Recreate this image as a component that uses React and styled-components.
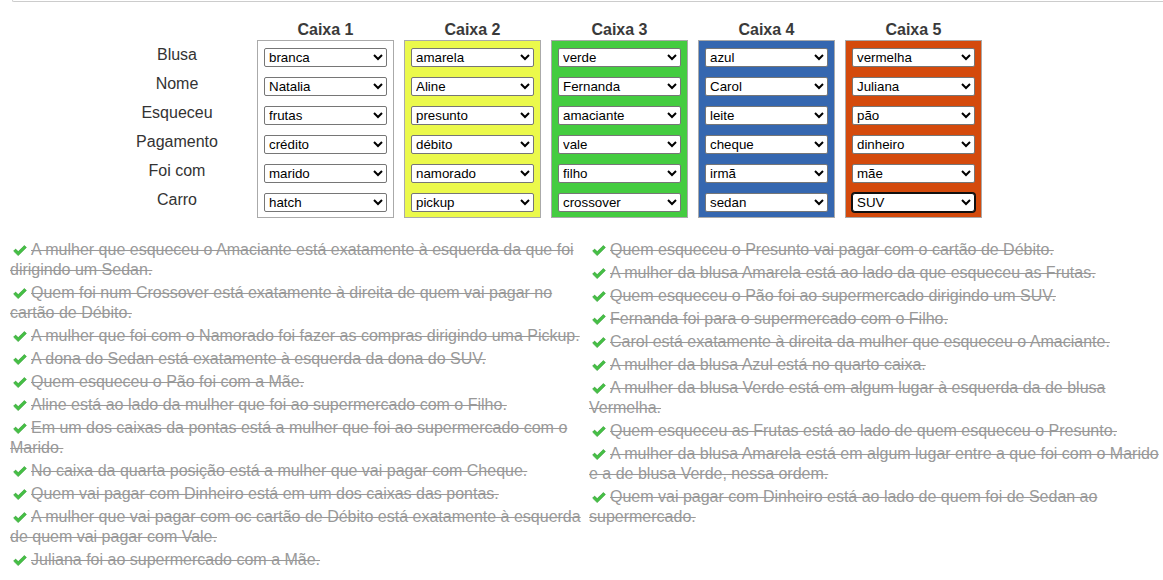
import React from "react";
import styled, { createGlobalStyle } from "styled-components";

const Global = createGlobalStyle`
  html, body { margin: 0; padding: 0; background: #fff; }
  body { font-family: "Liberation Sans", Arial, sans-serif; color: #333; }
`;

const Page = styled.div`
  width: 1163px;
  overflow: hidden;
`;

const TopRule = styled.div`
  margin-left: 12px;
  height: 1px;
  border: 1px solid #ccc;
  border-top: none;
  border-right: none;
  border-bottom-left-radius: 3px;
`;

const Board = styled.div`
  display: grid;
  grid-template-columns: 140px repeat(5, 137px);
  column-gap: 10px;
  padding-left: 107px;
  margin-top: 18px;
`;

const LabelColumn = styled.div`
  display: flex;
  flex-direction: column;
  padding-top: 20px;
`;

const RowLabel = styled.div`
  height: 29px;
  line-height: 29px;
  font-size: 16px;
  text-align: center;
  color: #333;
`;

const BoxColumn = styled.div`
  display: flex;
  flex-direction: column;
`;

const BoxTitle = styled.div`
  height: 20px;
  line-height: 20px;
  font-size: 16px;
  font-weight: bold;
  text-align: center;
  color: #3a3a3a;
`;

const Box = styled.div`
  display: flex;
  flex-direction: column;
  gap: 10px;
  border: 1px solid #aaa;
  padding: 7px 6px 5px;
  background: ${(p) => p.$bg};
`;

const Select = styled.select`
  width: 123px;
  height: 19px;
  margin: 0;
  box-sizing: border-box;
  font-family: "Liberation Sans", Arial, sans-serif;
  font-size: 13.33px;
  color: #000;
  background: #fff;
  border: 1px solid ${(p) => (p.$focused ? "#101010" : "#767676")};
  border-radius: ${(p) => (p.$focused ? "3px" : "2px")};
  box-shadow: ${(p) => (p.$focused ? "0 0 0 1px #101010" : "none")};
  outline: none;
`;

const Clues = styled.div`
  display: grid;
  grid-template-columns: 577px 1fr;
  align-items: start;
  padding-left: 10px;
  margin-top: 22px;
`;

const ClueList = styled.div`
  display: flex;
  flex-direction: column;
  padding-left: ${(p) => p.$pad || 0}px;
`;

const Clue = styled.p`
  margin: 0 0 3px;
  font-size: 16px;
  line-height: 20px;
  color: #999;
`;

const ClueText = styled.span`
  text-decoration: line-through;
  text-decoration-color: #999;
`;

const CheckSvg = styled.svg`
  display: inline-block;
  width: 14px;
  height: 11px;
  margin: 0 4px 0 3px;
  vertical-align: -1px;
`;

const Check = () => (
  <CheckSvg viewBox="0 0 14 11">
    <path
      d="M0.6 6.1 L2.6 4.1 L5.2 6.6 L11.4 0.5 L13.4 2.5 L5.2 10.6 Z"
      fill="#45c045"
      stroke="#2f9a2f"
      strokeWidth="0.6"
      strokeLinejoin="round"
    />
  </CheckSvg>
);

const labels = ["Blusa", "Nome", "Esqueceu", "Pagamento", "Foi com", "Carro"];

const boxes = [
  { bg: "#ffffff", values: ["branca", "Natalia", "frutas", "crédito", "marido", "hatch"] },
  { bg: "#ebf94b", values: ["amarela", "Aline", "presunto", "débito", "namorado", "pickup"] },
  { bg: "#44cc40", values: ["verde", "Fernanda", "amaciante", "vale", "filho", "crossover"] },
  { bg: "#3567b0", values: ["azul", "Carol", "leite", "cheque", "irmã", "sedan"] },
  { bg: "#d44a0c", values: ["vermelha", "Juliana", "pão", "dinheiro", "mãe", "SUV"], focusLast: true },
];

const leftClues = [
  "A mulher que esqueceu o Amaciante está exatamente à esquerda da que foi dirigindo um Sedan.",
  "Quem foi num Crossover está exatamente à direita de quem vai pagar no cartão de Débito.",
  "A mulher que foi com o Namorado foi fazer as compras dirigindo uma Pickup.",
  "A dona do Sedan está exatamente à esquerda da dona do SUV.",
  "Quem esqueceu o Pão foi com a Mãe.",
  "Aline está ao lado da mulher que foi ao supermercado com o Filho.",
  "Em um dos caixas da pontas está a mulher que foi ao supermercado com o Marido.",
  "No caixa da quarta posição está a mulher que vai pagar com Cheque.",
  "Quem vai pagar com Dinheiro está em um dos caixas das pontas.",
  "A mulher que vai pagar com oc cartão de Débito está exatamente à esquerda de quem vai pagar com Vale.",
  "Juliana foi ao supermercado com a Mãe.",
];

const rightClues = [
  "Quem esqueceu o Presunto vai pagar com o cartão de Débito.",
  "A mulher da blusa Amarela está ao lado da que esqueceu as Frutas.",
  "Quem esqueceu o Pão foi ao supermercado dirigindo um SUV.",
  "Fernanda foi para o supermercado com o Filho.",
  "Carol está exatamente à direita da mulher que esqueceu o Amaciante.",
  "A mulher da blusa Azul está no quarto caixa.",
  "A mulher da blusa Verde está em algum lugar à esquerda da de blusa Vermelha.",
  "Quem esqueceu as Frutas está ao lado de quem esqueceu o Presunto.",
  "A mulher da blusa Amarela está em algum lugar entre a que foi com o Marido e a de blusa Verde, nessa ordem.",
  "Quem vai pagar com Dinheiro está ao lado de quem foi de Sedan ao supermercado.",
];

export default function App() {
  return (
    <Page>
      <Global />
      <TopRule />
      <Board>
        <LabelColumn>
          {labels.map((l) => (
            <RowLabel key={l}>{l}</RowLabel>
          ))}
        </LabelColumn>
        {boxes.map((b, i) => (
          <BoxColumn key={i}>
            <BoxTitle>Caixa {i + 1}</BoxTitle>
            <Box $bg={b.bg}>
              {b.values.map((v, j) => (
                <Select
                  key={j}
                  defaultValue={v}
                  $focused={b.focusLast && j === b.values.length - 1}
                >
                  <option value={v}>{v}</option>
                </Select>
              ))}
            </Box>
          </BoxColumn>
        ))}
      </Board>
      <Clues>
        <ClueList>
          {leftClues.map((c, i) => (
            <Clue key={i}>
              <Check />
              <ClueText>{c}</ClueText>
            </Clue>
          ))}
        </ClueList>
        <ClueList $pad={2}>
          {rightClues.map((c, i) => (
            <Clue key={i}>
              <Check />
              <ClueText>{c}</ClueText>
            </Clue>
          ))}
        </ClueList>
      </Clues>
    </Page>
  );
}
